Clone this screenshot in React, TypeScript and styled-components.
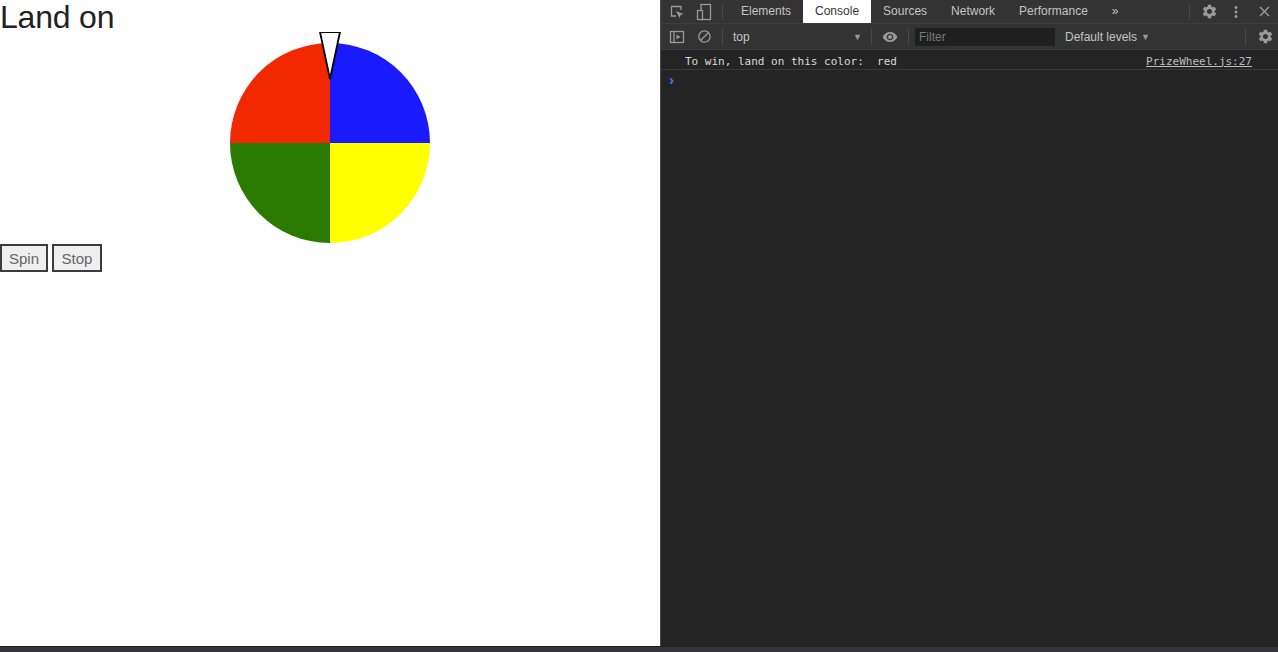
import React from "react";
import styled, { createGlobalStyle } from "styled-components";
import { MdSettings, MdBlock, MdVisibility, MdClose, MdMoreVert } from "react-icons/md";

const Global = createGlobalStyle`
  html, body { margin: 0; padding: 0; height: 100%; overflow: hidden; }
  body { font-family: "Liberation Sans", Arial, sans-serif; }
`;

const Screen = styled.div`
  display: grid;
  grid-template-columns: 660px 1fr;
  grid-template-rows: 1fr 6px;
  width: 1278px;
  height: 652px;
`;

const Page = styled.div`
  background: #fff;
  display: flex;
  flex-direction: column;
  align-items: flex-start;
`;

const Title = styled.h1`
  margin: 0;
  font-size: 32px;
  line-height: 34px;
  height: 34px;
  font-weight: 400;
  color: #222;
  letter-spacing: -0.2px;
  font-family: "Liberation Sans", Arial, sans-serif;
`;

const WheelBox = styled.div`
  align-self: stretch;
  display: flex;
  justify-content: center;
  margin-top: -2px;
`;

const Buttons = styled.div`
  display: flex;
  gap: 4px;
`;

const Btn = styled.button<{ $w: number }>`
  height: 28px;
  padding: 0 6px;
  background: #efefef;
  border: 2px solid #3c3c3c;
  border-radius: 0;
  font-family: "Liberation Sans", Arial, sans-serif;
  font-size: 15px;
  color: #666;
  width: ${(p) => p.$w}px;
`;

const Dev = styled.div`
  background: #242424;
  display: flex;
  flex-direction: column;
  border-left: 1px solid #4a4a4a;
  font-family: "Liberation Sans", Arial, sans-serif;
`;

const TabBar = styled.div`
  height: 23px;
  background: #333;
  border-bottom: 1px solid #3e3e3e;
  display: flex;
  align-items: stretch;
`;

const Toolbar = styled.div`
  height: 25px;
  background: #333;
  border-bottom: 1px solid #3e3e3e;
  display: flex;
  align-items: center;
`;

const IconCell = styled.div<{ $w: number }>`
  width: ${(p) => p.$w}px;
  display: flex;
  align-items: center;
  justify-content: center;
  color: #9a9a9a;
  flex: none;
`;

const Sep = styled.div`
  width: 1px;
  height: 16px;
  background: #4a4a4a;
  margin: 0 6px;
  flex: none;
  align-self: center;
`;

const Tab = styled.div<{ $active?: boolean }>`
  padding: 0 12px 1px;
  display: flex;
  align-items: center;
  justify-content: center;
  font-size: 12px;
  color: ${(p) => (p.$active ? "#333" : "#c4c4c4")};
  background: ${(p) => (p.$active ? "#fff" : "transparent")};
  flex: none;
`;

const Spacer = styled.div`
  flex: 1;
`;

const Context = styled.div`
  width: 136px;
  display: flex;
  align-items: center;
  justify-content: space-between;
  padding: 0 3px 0 4px;
  font-size: 12px;
  color: #c4c4c4;
  box-sizing: border-box;
  flex: none;
`;

const Arrow = styled.span`
  font-size: 9px;
  color: #9a9a9a;
`;

const FilterInput = styled.div`
  width: 140px;
  height: 18px;
  background: #1f1f1f;
  color: #7a7a7a;
  font-size: 12px;
  display: flex;
  align-items: center;
  padding-left: 4px;
  box-sizing: border-box;
  flex: none;
`;

const Levels = styled.div`
  margin-left: 10px;
  font-size: 12px;
  color: #c4c4c4;
  display: flex;
  align-items: center;
  gap: 4px;
`;

const Message = styled.div`
  height: 19px;
  border-bottom: 1px solid #3a3a3a;
  display: flex;
  align-items: center;
  justify-content: space-between;
  padding: 3px 26px 0 24px;
  box-sizing: border-box;
  height: 20px;
  font-family: "DejaVu Sans Mono", "Liberation Mono", monospace;
  font-size: 11px;
  color: #d9d9d9;
  white-space: pre;
`;

const Source = styled.span`
  text-decoration: underline;
  color: #bdbdbd;
`;

const Prompt = styled.div`
  height: 18px;
  display: flex;
  align-items: center;
  padding-left: 8px;
  color: #3b82f6;
  font-size: 15px;
  font-weight: 700;
`;

const BottomBar = styled.div`
  grid-column: 1 / 3;
  background: #33343c;
  border-top: 1px solid #222;
`;

const InspectIcon = () => (
  <svg width="16" height="16" viewBox="0 0 16 16" fill="none">
    <path d="M7 12H2.5V2.5H12V6" stroke="#9a9a9a" strokeWidth="1.3" />
    <path d="M7 7l7.5 3-3 1-1 3z" fill="#9a9a9a" />
  </svg>
);

const DeviceIcon = () => (
  <svg width="16" height="18" viewBox="0 0 16 18" fill="none" stroke="#9a9a9a" strokeWidth="1.3">
    <rect x="5" y="1.5" width="9.5" height="15" />
    <rect x="1.5" y="7.5" width="5" height="9" fill="#333" />
  </svg>
);

const SidebarIcon = () => (
  <svg width="16" height="16" viewBox="0 0 16 16" fill="none" stroke="#9a9a9a" strokeWidth="1.3">
    <rect x="1.5" y="2.5" width="13" height="11" />
    <line x1="5" y1="2.5" x2="5" y2="13.5" />
    <path d="M7.5 5.5l4 2.5-4 2.5z" fill="#9a9a9a" stroke="none" />
  </svg>
);

const Wheel = () => (
  <svg width="220" height="212" viewBox="0 -2 220 212">
    <path d="M110 109 L110 9 A100 100 0 0 1 210 109 Z" fill="#1a1aff" />
    <path d="M110 109 L210 109 A100 100 0 0 1 110 209 Z" fill="#ffff00" />
    <path d="M110 109 L110 209 A100 100 0 0 1 10 109 Z" fill="#2a7a00" />
    <path d="M110 109 L10 109 A100 100 0 0 1 110 9 Z" fill="#f22800" />
    <polygon points="100,-2 120,-2 110,45" fill="#fff" stroke="#000" strokeWidth="1.8" />
  </svg>
);

export default function App() {
  return (
    <>
      <Global />
      <Screen>
        <Page>
          <Title>Land on</Title>
          <WheelBox>
            <Wheel />
          </WheelBox>
          <Buttons>
            <Btn $w={48}>Spin</Btn>
            <Btn $w={50}>Stop</Btn>
          </Buttons>
        </Page>
        <Dev>
          <TabBar>
            <IconCell $w={31}><InspectIcon /></IconCell>
            <IconCell $w={24}><DeviceIcon /></IconCell>
            <Sep />
            <Tab>Elements</Tab>
            <Tab $active>Console</Tab>
            <Tab>Sources</Tab>
            <Tab>Network</Tab>
            <Tab>Performance</Tab>
            <Tab>»</Tab>
            <Spacer />
            <Sep />
            <IconCell $w={26}><MdSettings size={17} /></IconCell>
            <IconCell $w={28}><MdMoreVert size={18} /></IconCell>
            <IconCell $w={28}><MdClose size={17} /></IconCell>
          </TabBar>
          <Toolbar>
            <IconCell $w={31}><SidebarIcon /></IconCell>
            <IconCell $w={24}><MdBlock size={15} /></IconCell>
            <Sep />
            <Context>
              <span>top</span>
              <Arrow>▼</Arrow>
            </Context>
            <Sep />
            <IconCell $w={24}><MdVisibility size={16} /></IconCell>
            <Sep />
            <FilterInput>Filter</FilterInput>
            <Levels>Default levels <Arrow>▼</Arrow></Levels>
            <Spacer />
            <Sep />
            <IconCell $w={26}><MdSettings size={17} /></IconCell>
          </Toolbar>
          <Message>
            <span>To win, land on this color:  red</span>
            <Source>PrizeWheel.js:27</Source>
          </Message>
          <Prompt>›</Prompt>
        </Dev>
        <BottomBar />
      </Screen>
    </>
  );
}
